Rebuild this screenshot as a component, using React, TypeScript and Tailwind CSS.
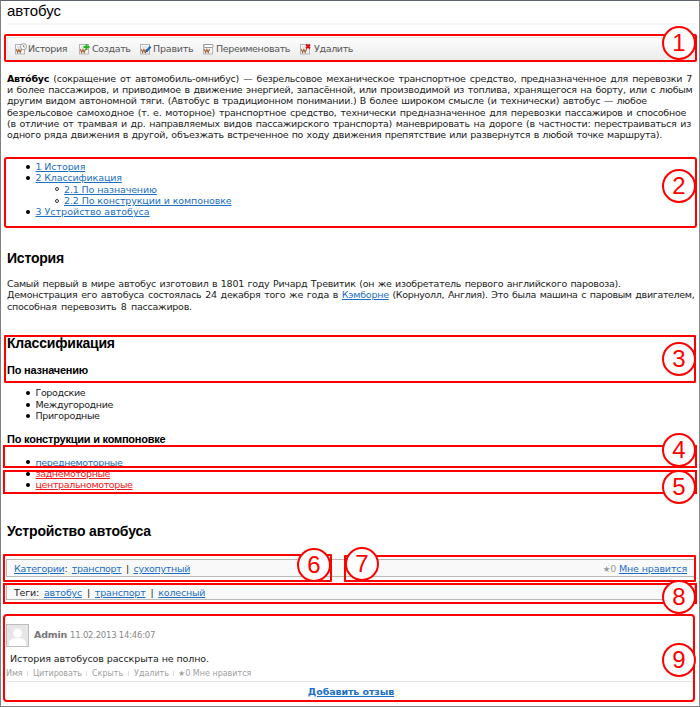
import type { ReactNode } from 'react';

function Line({ children, className = '[word-spacing:0.7px]' }: { children: ReactNode; className?: string }) {
  return <div className={`h-[11.4px] whitespace-nowrap leading-[11.4px] tracking-[-0.25px] ${className}`}>{children}</div>;
}

function Link({ children, className = 'text-[#1a6fc4]' }: { children: ReactNode; className?: string }) {
  return <a className={`underline decoration-1 underline-offset-1 ${className}`}>{children}</a>;
}

function Item({ children, hollow = false, className = 'tracking-[-0.37px]' }: { children: ReactNode; hollow?: boolean; className?: string }) {
  return (
    <li className={`flex h-[11.4px] items-center whitespace-nowrap leading-[11.4px] ${hollow ? 'pl-[47.5px]' : 'pl-[19px]'}`}>
      <span
        className={`mr-[5.5px] h-[4px] w-[4px] shrink-0 rounded-full ${hollow ? 'border border-[#333]' : 'bg-black'}`}
      />
      <span className={className}>{children}</span>
    </li>
  );
}

function WikiIcon({ children }: { children?: ReactNode }) {
  return (
    <svg width="12" height="12" viewBox="0 0 12 12" className="shrink-0" fill="none">
      <rect x="0.5" y="1.5" width="9" height="9.5" fill="#f8f8f8" stroke="#b4b4b4" />
      <path d="M2 4h6" stroke="#d5d5d5" />
      <path d="M1.3 6 2.6 9.4 3.9 6.4 5.2 9.4 6.5 6" stroke="#a5663c" strokeWidth="1.2" />
      {children}
    </svg>
  );
}

function Tool({ icon, label, className }: { icon: ReactNode; label: string; className: string }) {
  return (
    <div className={`flex shrink-0 items-center ${className}`}>
      {icon}
      <span>{label}</span>
    </div>
  );
}

function Frame({ className }: { className: string }) {
  return <div className={`absolute border-2 border-[#fe0000] ${className}`} />;
}

function Mark({ n, className }: { n: number; className: string }) {
  return (
    <div
      className={`absolute flex h-[34px] w-[34px] items-center justify-center rounded-full border-2 border-[#fe0000] bg-white font-['Liberation_Sans',sans-serif] text-[24px] leading-none text-[#fe0000] ${className}`}
    >
      {n}
    </div>
  );
}

export default function App() {
  return (
    <div className="relative h-[707px] w-[700px] overflow-hidden border border-t-[#5d6470] border-r-[#8c8c8c] border-b-[#808080] border-l-[#808080] bg-white pl-[6px] font-['DejaVu_Sans',sans-serif] text-[9.5px] text-[#222]">
      <h1 className="h-[24px] w-[688px] border-b-2 border-[#f5f5f5] font-['Liberation_Sans',sans-serif] text-[15px] leading-[20px] text-black">
        автобус
      </h1>
      <div className="mt-[12px] flex h-[23px] w-[688px] items-center border-t border-l border-[#e8e8e8] bg-linear-to-b from-[#fcfcfc] to-[#ececec] pl-[7px] tracking-[-0.35px] text-[#555]">
        <Tool
          label="История"
          className="w-[64px] gap-[1px]"
          icon={
            <WikiIcon>
              <circle cx="8.5" cy="3.7" r="3" fill="#fff" stroke="#999" />
              <path d="M8.5 2v2h1.5" stroke="#777" strokeWidth="0.8" />
            </WikiIcon>
          }
        />
        <Tool
          label="Создать"
          className="w-[61px] gap-[1px]"
          icon={
            <WikiIcon>
              <path d="M7.5 1v6M4.5 4h6" stroke="#22b422" strokeWidth="2" />
            </WikiIcon>
          }
        />
        <Tool
          label="Править"
          className="w-[63px] gap-[1px] tracking-[-0.2px]"
          icon={
            <WikiIcon>
              <path d="m6.5 8.5 4-5" stroke="#1c68c8" strokeWidth="2.2" />
              <path d="m5.6 9.7 1-1.3" stroke="#222" />
            </WikiIcon>
          }
        />
        <Tool
          label="Переименовать"
          className="w-[97px] gap-[1px]"
          icon={
            <WikiIcon>
              <rect x="1" y="1.5" width="9" height="3" rx="1" fill="#fff" stroke="#999" />
            </WikiIcon>
          }
        />
        <Tool
          label="Удалить"
          className="gap-[2px]"
          icon={
            <WikiIcon>
              <path d="m6 1.5 4 4M10 1.5l-4 4" stroke="#d8101c" strokeWidth="1.8" />
            </WikiIcon>
          }
        />
      </div>

      <div className="mt-[12.5px]">
        <Line className="[word-spacing:1.4px]">
          <b className="text-black">Авто́бус</b> (сокращение от автомобиль-омнибус) — безрельсовое механическое транспортное средство, предназначенное для перевозки 7
        </Line>
        <Line className="[word-spacing:0.8px]">и более пассажиров, и приводимое в движение энергией, запасённой, или производимой из топлива, хранящегося на борту, или с любым</Line>
        <Line>другим видом автономной тяги. (Автобус в традиционном понимании.) В более широком смысле (и технически) автобус — любое</Line>
        <Line className="[word-spacing:1.1px]">безрельсовое самоходное (т. е. моторное) транспортное средство, технически предназначенное для перевозки пассажиров и способное</Line>
        <Line className="[word-spacing:0.95px]">(в отличие от трамвая и др. направляемых видов пассажирского транспорта) маневрировать на дороге (в частности: перестраиваться из</Line>
        <Line className="[word-spacing:0.6px]">одного ряда движения в другой, объезжать встреченное по ходу движения препятствие или развернутся в любой точке маршрута).</Line>
      </div>

      <ul className="mt-[20px]">
        <Item className="tracking-[-0.1px]"><Link>1 История</Link></Item>
        <Item className="tracking-[-0.15px]"><Link>2 Классификация</Link></Item>
        <Item hollow className="tracking-[-0.13px]"><Link>2.1 По назначению</Link></Item>
        <Item hollow className="tracking-[-0.11px]"><Link>2.2 По конструкции и компоновке</Link></Item>
        <Item className="tracking-[0px]"><Link>3 Устройство автобуса</Link></Item>
      </ul>

      <h2 className="mt-[31px] h-[18px] font-['Liberation_Sans',sans-serif] text-[14px] font-bold leading-[18px] tracking-[-0.2px] text-black">История</h2>
      <div className="mt-[11px]">
        <Line>Самый первый в мире автобус изготовил в 1801 году Ричард Тревитик (он же изобретатель первого английского паровоза).</Line>
        <Line className="[word-spacing:1px]">
          Демонстрация его автобуса состоялась 24 декабря того же года в <Link>Кэмборне</Link>
          <span className="tracking-[-0.33px]"> (Корнуолл, Англия). Это была машина с паровым двигателем,</span>
        </Line>
        <Line className="[word-spacing:1.7px]">способная перевозить 8 пассажиров.</Line>
      </div>

      <h2 className="mt-[22px] h-[18px] font-['Liberation_Sans',sans-serif] text-[14px] font-bold leading-[18px] tracking-[-0.2px] text-black">Классификация</h2>
      <h3 className="mt-[11px] h-[14px] font-['Liberation_Sans',sans-serif] text-[11px] font-bold leading-[14px] tracking-[-0.22px] text-black">По назначению</h3>
      <ul className="mt-[10.5px]">
        <Item>Городские</Item>
        <Item>Междугородние</Item>
        <Item>Пригородные</Item>
      </ul>
      <h3 className="mt-[10px] h-[14px] font-['Liberation_Sans',sans-serif] text-[11px] font-bold leading-[14px] tracking-[-0.22px] text-black">По конструкции и компоновке</h3>
      <ul className="mt-[11px]">
        <Item><Link>переднемоторные</Link></Item>
        <Item><Link className="text-[#f21818]">заднемоторные</Link></Item>
        <Item><Link className="text-[#f21818]">центральномоторые</Link></Item>
      </ul>
      <h2 className="mt-[31.5px] h-[18px] font-['Liberation_Sans',sans-serif] text-[14px] font-bold leading-[18px] tracking-[-0.15px] text-black">Устройство автобуса</h2>

      <div className="mt-[19px] -ml-px flex h-[18px] w-[689px] items-center justify-between border border-[#b8b8b8] bg-[#f9f9f9] px-[7px] pt-[2px] whitespace-nowrap">
        <div className="tracking-[-0.3px] [word-spacing:1.8px]"><Link>Категории</Link>: <Link>транспорт</Link> | <Link>сухопутный</Link></div>
        <div className="tracking-[-0.13px] text-[#999]"><span className="text-[8.5px]">★</span>0 <Link>Мне нравится</Link></div>
      </div>
      <div className="mt-[7px] -ml-px flex h-[16px] w-[689px] items-center border border-[#b8b8b8] bg-[#f9f9f9] pt-[2px] pl-[7px] whitespace-nowrap">
        <div className="tracking-[-0.2px] [word-spacing:2.1px]">Теги: <Link>автобус</Link> | <Link>транспорт</Link> | <Link>колесный</Link></div>
      </div>

      <div className="mt-[23.5px] flex h-[23px] items-center gap-[5px] text-[#777]">
        <svg width="23" height="23" viewBox="0 0 23 23" className="-ml-px shrink-0">
          <rect x="0.5" y="0.5" width="22" height="22" fill="#e6e6e6" stroke="#bdbdbd" />
          <circle cx="11.5" cy="9" r="4.5" fill="#fff" />
          <path d="M3 22v-3q0-4 6-5h5q6 1 6 5v3z" fill="#fff" />
        </svg>
        <div className="whitespace-nowrap"><b className="tracking-[-0.2px]">Admin</b> <span className="text-[8.5px] tracking-[-0.24px] text-[#888]">11.02.2013 14:46:07</span></div>
      </div>
      <p className="mt-[6px] h-[12px] pl-[3px] leading-[12px] tracking-[-0.1px]">История автобусов расскрыта не полно.</p>
      <div className="mt-[4px] flex h-[10px] items-center text-[8px] leading-[10px] whitespace-nowrap text-[#a0a0a0]">
        <span className="-ml-px w-[21px] tracking-[-0.1px]">Имя</span>
        <i className="mr-[5px] h-[5px] w-px bg-[#ddd]" />
        <span className="w-[53px] tracking-[-0.15px]">Цитировать</span>
        <i className="mr-[5px] h-[5px] w-px bg-[#ddd]" />
        <span className="w-[36px]">Скрыть</span>
        <i className="mr-[5px] h-[5px] w-px bg-[#ddd]" />
        <span className="w-[39px]">Удалить</span>
        <i className="mr-[4px] h-[5px] w-px bg-[#ddd]" />
        <span>★0 Мне нравится</span>
      </div>
      <div className="mt-[2px] w-[688px] border-t border-[#e4e4e4] pt-[4px] text-center font-bold leading-[12px] tracking-[-0.1px]"><Link>Добавить отзыв</Link></div>

      <Frame className="top-[33px] left-[3px] h-[28px] w-[693px] rounded-[2px]" />
      <Frame className="top-[156px] left-[3px] h-[71px] w-[693px] rounded-[3px]" />
      <Frame className="top-[334px] left-[3px] h-[48px] w-[692px] rounded-[1px]" />
      <Frame className="top-[444px] left-[2px] h-[23px] w-[694px]" />
      <Frame className="top-[469px] left-[2px] h-[24px] w-[694px]" />
      <Frame className="top-[553px] left-[2px] h-[28px] w-[329px] rounded-[1px]" />
      <Frame className="top-[554px] left-[343px] h-[27px] w-[352px] rounded-[1px]" />
      <Frame className="top-[582px] left-[2px] h-[21px] w-[694px]" />
      <Frame className="top-[613px] left-[2px] h-[88px] w-[692px] rounded-[4px]" />
      <Mark n={1} className="top-[25px] left-[661px]" />
      <Mark n={2} className="top-[168px] left-[661px]" />
      <Mark n={3} className="top-[341px] left-[661px]" />
      <Mark n={4} className="top-[432px] left-[661px]" />
      <Mark n={5} className="top-[469px] left-[661px]" />
      <Mark n={6} className="top-[547px] left-[296px]" />
      <Mark n={7} className="top-[546px] left-[344px]" />
      <Mark n={8} className="top-[579px] left-[661px]" />
      <Mark n={9} className="top-[642px] left-[661px]" />
    </div>
  );
}
